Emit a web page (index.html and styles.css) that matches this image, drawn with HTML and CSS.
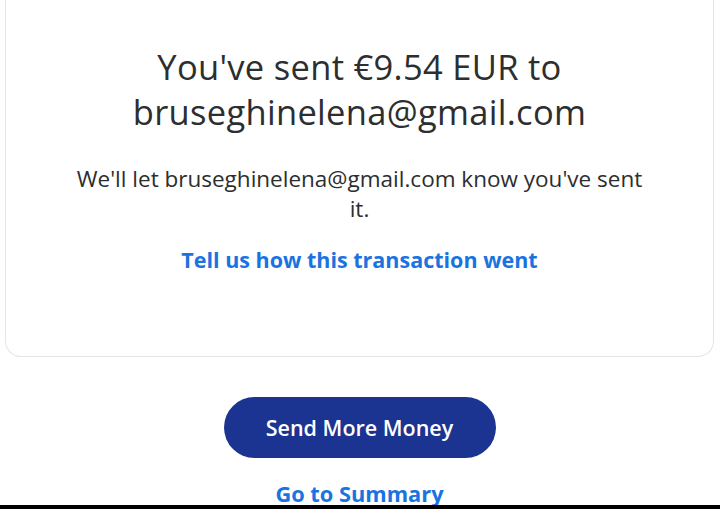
FILE: index.html
```html
<!DOCTYPE html>
<html lang="en">
<head>
<meta charset="utf-8">
<title>Sent</title>
<link rel="stylesheet" href="styles.css">
</head>
<body>
<div class="page">
  <section class="card">
    <h1 class="title">You've sent €9.54 EUR to<br>bruseghinelena@gmail.com</h1>
    <p class="note">We'll let bruseghinelena@gmail.com know you've sent it.</p>
    <a class="link" href="#">Tell us how this transaction went</a>
  </section>
  <div class="actions">
    <button class="btn" type="button">Send More Money</button>
    <a class="link summary" href="#">Go to Summary</a>
  </div>
</div>
</body>
</html>
```
FILE: styles.css
```css
* { box-sizing: border-box; }
html, body { margin: 0; padding: 0; background: #fff; }
body { font-family: "Open Sans", "Liberation Sans", sans-serif; color: #2c2e2f; }
.page {
  height: 509px;
  overflow: hidden;
  border-bottom: 4px solid #000;
  padding: 0 6px 0 5px;
  display: flex;
  flex-direction: column;
}
.card {
  flex: none;
  border: 1px solid #e5e5e5;
  border-top: none;
  border-radius: 0 0 16px 16px;
  height: 357px;
  padding: 44px 40px 0;
  display: flex;
  flex-direction: column;
  align-items: center;
  text-align: center;
}
.title {
  margin: 0;
  font-size: 34.5px;
  font-weight: 400;
  line-height: 45px;
  letter-spacing: 0.3px;
}
.note {
  margin: 30px 0 0;
  font-size: 22.5px;
  line-height: 30px;
  max-width: 575px;
}
.link {
  color: #1a73e0;
  font-weight: 700;
  font-size: 21.5px;
  text-decoration: none;
  line-height: 30px;
}
.card .link { margin-top: 21px; }
.actions {
  flex: none;
  display: flex;
  flex-direction: column;
  align-items: center;
  padding-top: 40px;
}
.btn {
  width: 272px;
  height: 61px;
  border: none;
  border-radius: 31px;
  background: #1b3391;
  color: #fff;
  font-family: inherit;
  font-size: 21.5px;
  font-weight: 600;
}
.summary { margin-top: 21px; font-size: 21.8px; }
```
